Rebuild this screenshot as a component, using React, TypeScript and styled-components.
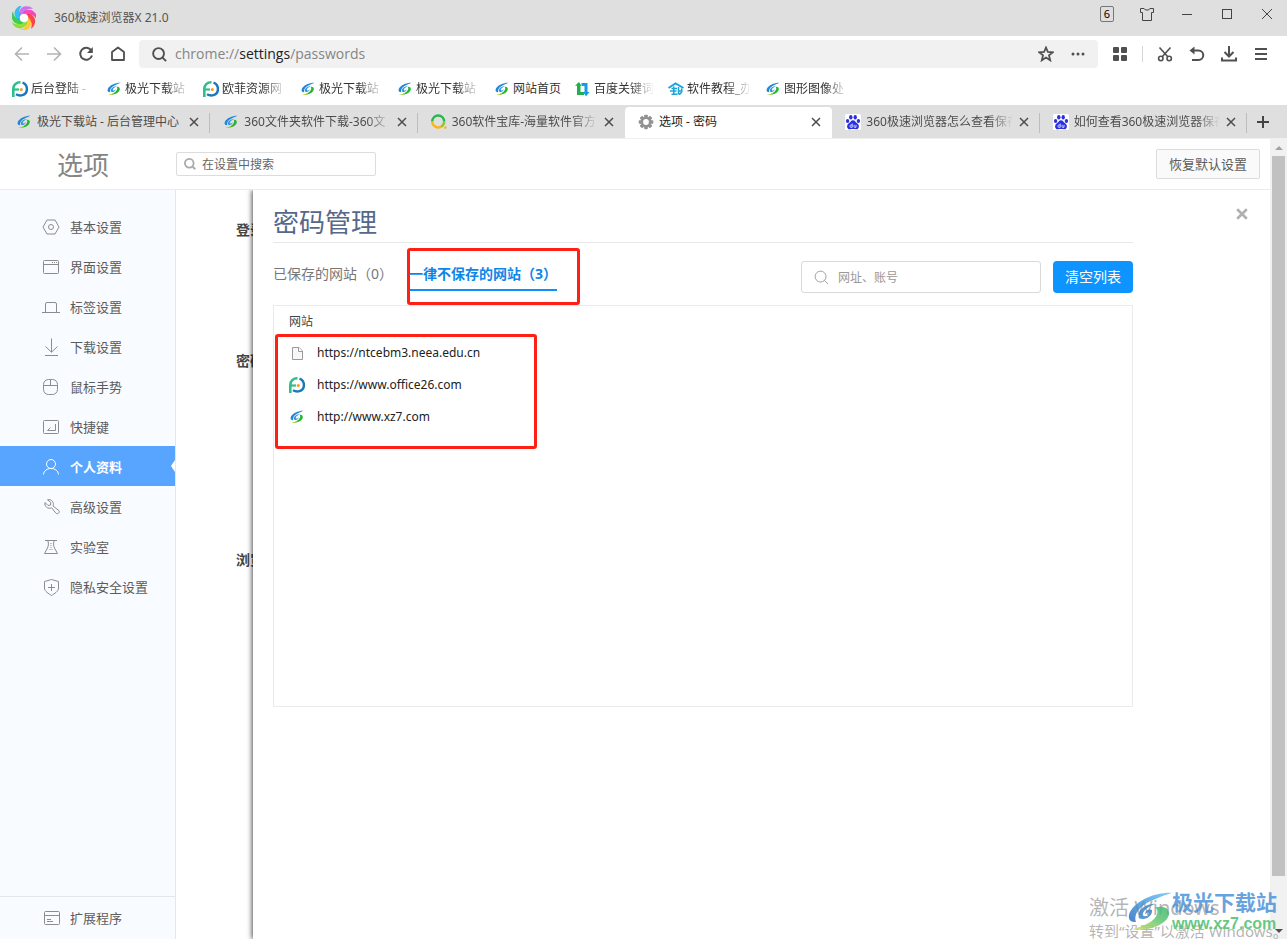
import React from 'react';
import styled, { createGlobalStyle, css } from 'styled-components';

const GlobalStyle = createGlobalStyle`
  * { box-sizing: border-box; }
  html, body { margin: 0; padding: 0; }
  body, button, input {
    font-family: "Noto Sans", "Noto Sans CJK SC", sans-serif;
    font-size: 12px;
  }
  body { background: #fff; color: #555; }
  button { border: 0; padding: 0; background: none; color: inherit; display: flex; align-items: center; justify-content: center; }
  a { color: inherit; text-decoration: none; }
  svg { display: block; flex: none; }
  h1, h2, h3, p, ul { margin: 0; padding: 0; font-weight: 400; }
  ul { list-style: none; }
`;

const Page = styled.div`
  position: relative;
  min-height: 100vh;
  display: flex;
  flex-direction: column;
  overflow: hidden;
`;

/* ---------- browser chrome ---------- */

const TitleBar = styled.header`
  display: flex;
  align-items: center;
  justify-content: space-between;
  height: 36px;
  padding-left: 12px;
  background: #dfdfdf;
`;

const AppName = styled.div`
  display: flex;
  align-items: center;
  gap: 18px;
  line-height: 20px;
`;

const WindowButtons = styled.div`
  display: flex;
  align-self: flex-start;
`;

const WindowButton = styled.button`
  width: 40px;
  height: 28px;
  color: #444;
`;

const CountBadge = styled.span`
  width: 14px;
  height: 16px;
  border: 1px solid #777;
  border-radius: 2px;
  color: #000;
  font-size: 11px;
  line-height: 14px;
`;

const Toolbar = styled.div`
  display: flex;
  align-items: center;
  height: 36px;
  padding: 0 10px 0 6px;
  color: #505050;
`;

const ToolButton = styled.button<{ $dim?: boolean }>`
  width: 32px;
  height: 28px;
  color: ${(p) => (p.$dim ? '#b4b4b4' : '#505050')};
`;

const AddressBar = styled.div`
  display: flex;
  align-items: center;
  flex: 1;
  height: 28px;
  margin: 0 6px 0 5px;
  padding: 0 4px 0 13px;
  border-radius: 4px;
  background: #f1f1f1;
`;

const Address = styled.p`
  flex: 1;
  padding-left: 8px;
  font-family: "Open Sans", "Noto Sans CJK SC", sans-serif;
  font-size: 14px;
  line-height: 20px;
  color: #858585;
  b { color: #222; font-weight: 400; }
`;

const ToolDivider = styled.span`
  width: 1px;
  height: 16px;
  margin: 0 6px;
  background: #d5d5d5;
`;

const BookmarkBar = styled.nav`
  display: flex;
  align-items: center;
  gap: 14px;
  height: 33px;
  padding-left: 12px;
`;

const Bookmark = styled.a`
  display: flex;
  align-items: center;
  gap: 3px;
  line-height: 18px;
  color: #333;
`;

const fade = css`
  overflow: hidden;
  white-space: nowrap;
  mask-image: linear-gradient(to right, #000 calc(100% - 24px), transparent);
`;

const BookmarkText = styled.span<{ $width: number; $full?: boolean }>`
  width: ${(p) => p.$width}px;
  white-space: nowrap;
  ${(p) => !p.$full && fade}
`;

const TabStrip = styled.nav`
  display: flex;
  height: 33px;
  padding-left: 3px;
  background: #dfdfdf;
`;

const Tab = styled.div<{ $active?: boolean; $divider?: boolean }>`
  display: flex;
  align-items: center;
  flex: 1;
  min-width: 0;
  margin-top: ${(p) => (p.$active ? 2 : 0)}px;
  padding: 0 9px 0 13px;
  border-radius: 4px 4px 0 0;
  background: ${(p) => (p.$active ? '#fff' : 'linear-gradient(#bdbdbd, #bdbdbd) right 8px / 1px 20px no-repeat')};
  ${(p) => !p.$active && !p.$divider && 'background: none;'}
  color: ${(p) => (p.$active ? '#222' : '#4c4c4c')};
  padding-bottom: ${(p) => (p.$active ? 2 : 0)}px;
`;

const TabTitle = styled.a<{ $full?: boolean }>`
  flex: 1;
  min-width: 0;
  margin-left: 5px;
  line-height: 18px;
  white-space: nowrap;
  ${(p) => !p.$full && fade}
`;

const TabClose = styled.button`
  width: 14px;
  height: 16px;
  margin-left: 4px;
  color: #4c4c4c;
`;

const NewTab = styled.button`
  width: 40px;
  padding-right: 8px;
  height: 34px;
  color: #444;
`;

/* ---------- settings page ---------- */

const Viewport = styled.div`
  display: flex;
  flex: 1;
  border-top: 1px solid #f0f0f0;
`;

const Settings = styled.div`
  display: flex;
  flex-direction: column;
  flex: 1;
  min-width: 0;
`;

const SettingsHeader = styled.header`
  display: flex;
  align-items: center;
  height: 51px;
  padding: 0 10px 0 57px;
  border-bottom: 1px solid #ebebeb;
`;

const PageTitle = styled.h1`
  width: 119px;
  padding-top: 2px;
  font-size: 26px;
  line-height: 36px;
  color: #858585;
`;

const SettingsSearch = styled.label`
  display: flex;
  align-items: center;
  gap: 6px;
  width: 200px;
  height: 24px;
  padding: 0 7px;
  border: 1px solid #dcdcdc;
  border-radius: 2px;
  color: #aaa;
`;

const BareInput = styled.input<{ $hint: string }>`
  flex: 1;
  min-width: 0;
  border: 0;
  padding: 2px 0 0;
  outline: 0;
  background: none;
  line-height: 18px;
  color: #444;
  &::placeholder { color: ${(p) => p.$hint}; opacity: 1; }
`;

const ResetButton = styled.button`
  width: 104px;
  height: 30px;
  margin-left: auto;
  padding-bottom: 2px;
  border: 1px solid #dcdcdc;
  border-radius: 2px;
  background: #fafafa;
  font-size: 13px;
  color: #5c5c5c;
`;

const Body = styled.div`
  display: flex;
  flex: 1;
`;

const Sidebar = styled.nav`
  display: flex;
  flex-direction: column;
  width: 176px;
  padding-top: 16px;
  border-right: 1px solid #e3e7ec;
  background: #f8fbff;
`;

const MenuItem = styled.a<{ $active?: boolean }>`
  position: relative;
  display: flex;
  align-items: center;
  gap: 10px;
  height: 40px;
  padding: 2px 0 0 42px;
  font-size: 13px;
  line-height: 20px;
  color: ${(p) => (p.$active ? '#fff' : '#5c5c5c')};
  font-weight: ${(p) => (p.$active ? 700 : 400)};
  background: ${(p) => (p.$active ? '#57a5ff' : 'none')};
  svg { color: ${(p) => (p.$active ? '#fff' : '#8c8c8c')}; }
`;

const Pointer = styled.span`
  position: absolute;
  right: 0;
  top: 14px;
  border: 6px solid transparent;
  border-right: 4px solid #fff;
  border-left: 0;
`;

const MenuFooter = styled.div`
  margin-top: auto;
  padding-bottom: 2px;
  border-top: 1px solid #e3e7ec;
`;

const Underlay = styled.div`
  width: 77px;
  padding: 30px 0 0 60px;
  overflow: hidden;
`;

const SectionName = styled.h3<{ $height: number }>`
  height: ${(p) => p.$height}px;
  font-size: 14px;
  font-weight: 700;
  line-height: 20px;
  white-space: nowrap;
  color: #444;
`;

const Panel = styled.main`
  position: relative;
  display: flex;
  justify-content: space-between;
  align-items: flex-start;
  flex: 1;
  min-width: 0;
  padding: 12px 20px 0 20px;
  background: #fff;
  box-shadow: -1px 0 5px rgba(0, 0, 0, 0.7);
  clip-path: inset(0 0 0 -10px);
`;

const Manager = styled.section`
  flex: 1;
  max-width: 860px;
`;

const ManagerTitle = styled.h2`
  height: 41px;
  border-bottom: 1px solid #e8e8e8;
  font-size: 26px;
  line-height: 40px;
  color: #56688a;
`;

const Controls = styled.div`
  display: flex;
  align-items: flex-start;
  margin-top: 18px;
`;

const SiteTab = styled.button<{ $active?: boolean }>`
  height: 30px;
  margin-right: 16px;
  padding-bottom: ${(p) => (p.$active ? 2 : 4)}px;
  font-size: 14px;
  line-height: 20px;
  white-space: nowrap;
  color: ${(p) => (p.$active ? '#0d86e8' : '#777')};
  font-weight: ${(p) => (p.$active ? 700 : 400)};
  border-bottom: ${(p) => (p.$active ? '2px solid #0d8fff' : '0')};
`;

const SiteSearch = styled.label`
  display: flex;
  align-items: center;
  gap: 9px;
  width: 240px;
  height: 32px;
  margin: 0 12px 0 auto;
  padding: 0 12px;
  border: 1px solid #d9d9d9;
  border-radius: 3px;
  color: #999;
`;

const ClearButton = styled.button`
  width: 80px;
  height: 32px;
  padding-bottom: 2px;
  border-radius: 4px;
  background: #0d94ff;
  color: #fff;
  font-size: 14px;
`;

const SiteList = styled.div`
  min-height: 402px;
  margin-top: 12px;
  border: 1px solid #ebebeb;
`;

const SiteTable = styled.table`
  width: 100%;
  border-collapse: collapse;
  th, td { height: 32px; padding: 0 15px 2px; text-align: left; font-weight: 400; }
  th { color: #444; }
  td { color: #222; }
`;

const Site = styled.div`
  display: flex;
  align-items: center;
  gap: 12px;
  line-height: 20px;
`;

const PanelClose = styled.button`
  width: 16px;
  height: 16px;
  margin-top: 4px;
  color: #b0b0b0;
`;

const Scrollbar = styled.div`
  display: flex;
  flex-direction: column;
  align-items: center;
  width: 17px;
  background: #f1f1f1;
`;

const ScrollArrow = styled.button`
  width: 17px;
  height: 17px;
`;

const ScrollTrack = styled.div`
  flex: 1;
  width: 13px;
`;

const ScrollThumb = styled.div`
  height: 94%;
  background: #c1c1c1;
`;

/* ---------- overlays ---------- */

const Marker = styled.div<{ $x: number; $y: number; $w: number; $h: number }>`
  position: absolute;
  left: ${(p) => p.$x}px;
  top: ${(p) => p.$y}px;
  width: ${(p) => p.$w}px;
  height: ${(p) => p.$h}px;
  border: 3px solid #ff2015;
  border-radius: 3px;
  pointer-events: none;
`;

const Activation = styled.div`
  position: absolute;
  right: 2px;
  bottom: -2px;
  width: 196px;
  color: rgba(130, 130, 130, 0.6);
  font-size: 15px;
  line-height: 20px;
  white-space: nowrap;
  pointer-events: none;
`;

const ActivationTitle = styled.p`
  font-size: 20px;
  line-height: 26px;
`;

const SiteMark = styled.div`
  position: absolute;
  right: 10px;
  bottom: 6px;
  display: flex;
  align-items: center;
  pointer-events: none;
`;

const MarkName = styled.p`
  font-size: 21px;
  font-weight: 700;
  line-height: 26px;
  color: rgba(75, 146, 216, 0.85);
`;

const MarkUrl = styled.p`
  font-family: "Liberation Sans", sans-serif;
  font-size: 16px;
  font-weight: 700;
  line-height: 18px;
  color: rgba(76, 190, 110, 0.85);
`;

/* ---------- drawings ---------- */

const Line = ({ size = 16, w = 1, box = 16, children }: { size?: number; w?: number; box?: number; children: React.ReactNode }) => (
  <svg width={size} height={size} viewBox={`0 0 ${box} ${box}`} fill="none" stroke="currentColor" strokeWidth={w} aria-hidden="true">
    {children}
  </svg>
);

const petals = ['#c95cf5', '#f92bb0', '#fb2a2a', '#ffc61c', '#7fdc1c', '#1fc93a', '#18b4f5'];
const AppLogo = () => (
  <svg width="24" height="24" viewBox="-12 -12 24 24" aria-hidden="true">
    <circle r="7.500" fill="none" stroke="#fff" strokeWidth="4" opacity="0.5" />
    {petals.map((c, i) => (
      <path key={c} d="M-4.200 -1.500 C-6.500 -6 -3.500 -11.500 2 -11.800 C5 -12 7.500 -11 9 -9 C5 -10 1.500 -8.500 0.500 -4.500 C-1.500 -4.500 -3.500 -3.500 -4.200 -1.500 Z" fill={c} opacity="0.85" transform={`rotate(${i * 51.4})`} />
    ))}
    <circle r="4" fill="#fff" opacity="0.9" />
  </svg>
);

const Aurora = () => (
  <svg width="16" height="16" viewBox="0 0 16 16" aria-hidden="true">
    <path d="M14.500 1.800 C9 1.800 3.500 4.300 1.800 8 C1 10 2 11.300 4.300 11.200 C3.300 8.500 5.800 5.300 10 3.700 C11.500 3 13 2.300 14.500 1.800 Z" fill="#1f86dc" />
    <path d="M4.800 9.800 C4.800 7 8 5 11 5.200 C8.500 6 6.600 7.400 6.700 9.300 C8 10 9.300 9 9.300 8 C10 9.800 7.500 11.400 5.600 10.900 Z" fill="#2e93dd" />
    <path d="M2.500 13.800 C7.500 14.200 13 12.500 13.800 8.500 C14 6.500 12.600 5.500 10.800 5.900 C12 7.600 10.600 10.300 7.800 11.900 C6.200 12.800 4.200 13.400 2.500 13.800 Z" fill="#27b52f" />
    <path d="M2.500 13.800 C4.200 13.400 6.200 12.800 7.800 11.900 C8.500 13 5.500 14.200 2.500 13.800 Z" fill="#d3d92b" />
  </svg>
);

const Office = () => (
  <svg width="16" height="16" viewBox="0 0 16 16" fill="none" aria-hidden="true">
    <path d="M1.300 16 V8 C1.300 4 4 1.300 8.500 1.300" stroke="#2fbf8b" strokeWidth="2.600" />
    <path d="M1.500 8.500 H7" stroke="#2fbf8b" strokeWidth="2.200" />
    <path d="M10.500 1.600 C16.500 3.800 16.300 12.500 10.500 14.200 C8 15 6 14.500 4 13.300" stroke="#1b78bf" strokeWidth="2.400" />
    <circle cx="9.300" cy="8.500" r="1.500" fill="#ff9a1f" />
  </svg>
);

const Ring360 = () => (
  <svg width="16" height="16" viewBox="0 0 16 16" fill="none" strokeWidth="2.400" aria-hidden="true">
    <path d="M1.200 7.500 A6 6 0 1 1 13.200 7.500" stroke="#27b64e" />
    <path d="M1.200 7.500 A6 6 0 0 0 10.200 12.600" stroke="#f7b719" />
    <path d="M10.200 12.600 A6 6 0 0 0 13.200 7.500" stroke="#8fc23a" />
    <circle cx="14.300" cy="13.600" r="1.300" fill="#f7b719" />
  </svg>
);

const Keyword = () => (
  <svg width="16" height="16" viewBox="0 0 16 16" aria-hidden="true">
    <path d="M0 4.800 L4 1 L6.500 4.800 H5.500 V11 H9 V14 H2 V4.800 Z" fill="#23b04a" />
    <path d="M6.500 2 H12.500 V11 H14.500 L11 15.300 L8 11 H9.500 V5 H6.500 Z" fill="#109ce8" />
  </svg>
);

const Course = () => (
  <svg width="16" height="16" viewBox="0 0 16 16" fill="none" stroke="#1ba4dc" strokeWidth="1.500" aria-hidden="true">
    <path d="M0.500 7 L7.500 2.500 L15.500 7" strokeWidth="2" />
    <path d="M3.500 7.500 H9 M2 10 H8.500 M3.500 13.200 H9.500 M5.800 5.500 V13" />
    <path d="M10.500 6 V13.500 M13 7.500 C14.800 9 14 12 11 13.500 M11 10 H14.500" />
  </svg>
);

const Baidu = () => (
  <svg width="16" height="16" viewBox="0 0 16 16" aria-hidden="true">
    <rect width="16" height="16" rx="1.500" fill="#fff" />
    <g fill="#2a2fe0">
      <ellipse cx="5.800" cy="3.300" rx="1.700" ry="2.200" />
      <ellipse cx="10.200" cy="3.300" rx="1.700" ry="2.200" />
      <ellipse cx="2.600" cy="7" rx="1.700" ry="2.100" />
      <ellipse cx="13.400" cy="7" rx="1.700" ry="2.100" />
      <path d="M8 6.300 C10 6.300 10.500 8.300 12.400 9.500 C15 11.500 14 15.500 11 15.300 C9 15 7 15 5 15.300 C2 15.500 1 11.500 3.600 9.500 C5.500 8.300 6 6.300 8 6.300 Z" />
    </g>
    <path d="M7.200 9.500 V13.300 H5.800 C4.600 13.300 4.600 11 5.800 11 H7 M9 10.800 V12.700 C9 13.300 9.500 13.400 11 13.300 V10.800" fill="none" stroke="#fff" strokeWidth="0.800" />
  </svg>
);

const Gear = () => (
  <svg width="16" height="16" viewBox="-8 -8 16 16" aria-hidden="true">
    {[0, 45, 90, 135].map((a) => (
      <rect key={a} x="-1.800" y="-7.300" width="3.600" height="14.600" rx="0.800" fill="#929292" transform={`rotate(${a})`} />
    ))}
    <circle r="5.500" fill="#929292" />
    <circle r="2.900" fill="#fff" />
  </svg>
);

const Cross = ({ size = 10, w = 1.5 }: { size?: number; w?: number }) => (
  <Line size={size} box={10} w={w}><path d="M1 1 L9 9 M9 1 L1 9" /></Line>
);

const Magnifier = ({ size, w }: { size: number; w: number }) => (
  <Line size={size} w={w}><circle cx="7" cy="7" r="5.800" /><path d="M11 11 L15 15" /></Line>
);

const PageIcon = () => (
  <svg width="16" height="16" viewBox="0 0 16 16" fill="#f7f7f7" stroke="#999" aria-hidden="true">
    <path d="M3.500 2.500 H10 L13.500 6 V14.500 H3.500 Z" /><path d="M9.500 2.500 V6.500 H13.500" fill="#fff" />
  </svg>
);

/* ---------- data ---------- */

const bookmarks = [
  { icon: <Office />, text: '后台登陆 -', width: 61 },
  { icon: <Aurora />, text: '极光下载站', width: 64 },
  { icon: <Office />, text: '欧菲资源网', width: 64 },
  { icon: <Aurora />, text: '极光下载站', width: 64 },
  { icon: <Aurora />, text: '极光下载站', width: 64 },
  { icon: <Aurora />, text: '网站首页', width: 48, full: true },
  { icon: <Keyword />, text: '百度关键词', width: 60 },
  { icon: <Course />, text: '软件教程_办', width: 64 },
  { icon: <Aurora />, text: '图形图像处', width: 64 },
];

const tabs = [
  { icon: <Aurora />, text: '极光下载站 - 后台管理中心', divider: true, full: true },
  { icon: <Aurora />, text: '360文件夹软件下载-360文', divider: true },
  { icon: <Ring360 />, text: '360软件宝库-海量软件官方' },
  { icon: <Gear />, text: '选项 - 密码', active: true, full: true },
  { icon: <Baidu />, text: '360极速浏览器怎么查看保存', divider: true },
  { icon: <Baidu />, text: '如何查看360极速浏览器保存', divider: true },
];

const menu = [
  { text: '基本设置', art: <><path d="M5 2 H13 L17 9 L13 16 H5 L1 9 Z" /><circle cx="9" cy="9" r="2.500" /></> },
  { text: '界面设置', art: <><rect x="1.500" y="2.500" width="15" height="13" rx="1" /><path d="M1.500 6.500 H16.500 M10 4.500 h1 M12 4.500 h1 M14 4.500 h1" /></> },
  { text: '标签设置', art: <><path d="M3.500 14.500 V6 Q3.500 4.500 5 4.500 H13 Q14.500 4.500 14.500 6 V14.500" /><path d="M0 14.500 H18" /></> },
  { text: '下载设置', art: <path d="M9.500 0.500 V14 M3.500 8.500 L9.500 14.200 L15.500 8.500 M3 17.500 H16" /> },
  { text: '鼠标手势', art: <><rect x="1.500" y="1.500" width="14" height="15" rx="5" /><path d="M1.500 7.500 H15.500 M8.500 1.500 V7.500" /></> },
  { text: '快捷键', art: <><rect x="1.500" y="2.500" width="15" height="13" rx="1" /><path d="M13.500 6 V12.500 H5.500 M8.500 9.500 L5.500 12.500" /></> },
  { text: '个人资料', active: true, art: <><circle cx="9" cy="6" r="4.500" /><path d="M1.500 16.500 C2 12.500 5 10.500 9 10.500 C13 10.500 16 12.500 16.500 16.500" /></> },
  { text: '高级设置', art: <path d="M5.500 1.800 C9.500 0.800 12.500 4.500 11 8 L17 12.700 C18 14.700 15.800 16.500 14 15.300 L9.500 9.700 C6 11.500 2.200 8.500 3 4.500 L6 7.500 L8.500 7 L8.800 4.500 Z" /> },
  { text: '实验室', art: <><path d="M3 2.500 H15 M5.500 2.500 C7 4 6.500 8 5.500 10 L2.500 15.500 H15.500 L12.500 10 C11.500 8 11 4 12.500 2.500" /><path d="M9 5 V11 M7.500 11.500 H10.500" strokeDasharray="1 1" /></> },
  { text: '隐私安全设置', art: <><path d="M9.500 1.500 L16.500 3.500 V10 C16.500 13.500 12.500 15.500 9.500 17.500 C6.500 15.500 2.500 13.500 2.500 10 V3.500 Z" /><path d="M9.500 6 V13 M6 9.500 H13" /></> },
];

const sites = [
  { icon: <PageIcon />, url: 'https://ntcebm3.neea.edu.cn' },
  { icon: <Office />, url: 'https://www.office26.com' },
  { icon: <Aurora />, url: 'http://www.xz7.com' },
];

export default function App() {
  return (
    <Page>
      <GlobalStyle />
      <TitleBar>
        <AppName><AppLogo />360极速浏览器X 21.0</AppName>
        <WindowButtons>
          <WindowButton aria-label="窗口数"><CountBadge>6</CountBadge></WindowButton>
          <WindowButton aria-label="皮肤">
            <Line><path d="M1.500 2.500 H5 C5.500 4.500 10.500 4.500 11 2.500 H14.500 V6.500 H12.500 V14.500 H3.500 V6.500 H1.500 Z" /></Line>
          </WindowButton>
          <WindowButton aria-label="最小化"><Line size={10} box={10}><path d="M0 5.500 H10" /></Line></WindowButton>
          <WindowButton aria-label="最大化"><Line size={10} box={10}><rect x="0.500" y="0.500" width="9" height="9" /></Line></WindowButton>
          <WindowButton aria-label="关闭"><Line size={12} box={12}><path d="M1 1 L11 11 M11 1 L1 11" /></Line></WindowButton>
        </WindowButtons>
      </TitleBar>

      <Toolbar>
        <ToolButton $dim aria-label="后退"><Line w={1.6}><path d="M15 8 H2 M8 1.500 L1.500 8 L8 14.500" /></Line></ToolButton>
        <ToolButton $dim aria-label="前进"><Line w={1.6}><path d="M1 8 H14 M8 1.500 L14.500 8 L8 14.500" /></Line></ToolButton>
        <ToolButton aria-label="刷新">
          <Line w={2}><path d="M13.300 4.500 A6 6 0 1 0 14 9.500" /><path d="M14.800 1 V7 H9 Z" fill="currentColor" stroke="none" /></Line>
        </ToolButton>
        <ToolButton aria-label="主页"><Line w={1.8}><path d="M2 14 V6 L8 1.500 L14 6 V14 Z" strokeLinejoin="round" /></Line></ToolButton>
        <AddressBar>
          <Magnifier size={15} w={2} />
          <Address>chrome://<b>settings</b>/passwords</Address>
          <ToolButton aria-label="收藏"><Line w={1.8}><path d="M8 1.500 L9.900 6 L14.700 6.300 L11 9.400 L12.200 14.300 L8 11.600 L3.800 14.300 L5 9.400 L1.300 6.300 L6.100 6 Z" /></Line></ToolButton>
          <ToolButton aria-label="更多">
            <svg width="16" height="16" viewBox="0 0 16 16" fill="currentColor" aria-hidden="true"><circle cx="3" cy="8" r="1.500" /><circle cx="8" cy="8" r="1.500" /><circle cx="13" cy="8" r="1.500" /></svg>
          </ToolButton>
        </AddressBar>
        <ToolButton aria-label="扩展">
          <svg width="14" height="14" viewBox="0 0 14 14" fill="currentColor" aria-hidden="true"><rect width="6" height="6" rx="1" /><rect x="8" width="6" height="6" rx="1" /><rect y="8" width="6" height="6" rx="1" /><rect x="8" y="8" width="6" height="6" rx="1" /></svg>
        </ToolButton>
        <ToolDivider />
        <ToolButton aria-label="截图"><Line w={1.6}><circle cx="3.800" cy="12.500" r="2.200" /><circle cx="12.200" cy="12.500" r="2.200" /><path d="M2.500 1.500 L11 11 M13.500 1.500 L5 11" /></Line></ToolButton>
        <ToolButton aria-label="恢复"><Line w={2}><path d="M4 4.500 H9.500 A4.700 4.700 0 0 1 9.500 14 H3" /><path d="M5.500 0.500 V8.500 L0.500 4.500 Z" fill="currentColor" stroke="none" /></Line></ToolButton>
        <ToolButton aria-label="下载"><Line w={2}><path d="M8 0 V10 M3.500 6 L8 10.500 L12.500 6 M1 11.500 V14.500 H15 V11.500" /></Line></ToolButton>
        <ToolButton aria-label="菜单"><Line w={2}><path d="M2 3 H14 M2 8 H14 M2 13 H14" /></Line></ToolButton>
      </Toolbar>

      <BookmarkBar>
        {bookmarks.map((b, i) => (
          <Bookmark key={i} href="#">{b.icon}<BookmarkText $width={b.width} $full={b.full}>{b.text}</BookmarkText></Bookmark>
        ))}
      </BookmarkBar>

      <TabStrip>
        {tabs.map((t) => (
          <Tab key={t.text} $active={t.active} $divider={t.divider}>
            {t.icon}
            <TabTitle href="#" $full={t.full}>{t.text}</TabTitle>
            <TabClose aria-label="关闭标签"><Cross /></TabClose>
          </Tab>
        ))}
        <NewTab aria-label="新标签"><Line size={12} box={12} w={2}><path d="M6 0 V12 M0 6 H12" /></Line></NewTab>
      </TabStrip>

      <Viewport>
        <Settings>
          <SettingsHeader>
            <PageTitle>选项</PageTitle>
            <SettingsSearch>
              <Magnifier size={12} w={2.4} />
              <BareInput $hint="#666" placeholder="在设置中搜索" aria-label="在设置中搜索" />
            </SettingsSearch>
            <ResetButton>恢复默认设置</ResetButton>
          </SettingsHeader>
          <Body>
            <Sidebar>
              {menu.map((m) => (
                <MenuItem key={m.text} href="#" $active={m.active}>
                  <Line size={18} box={18}>{m.art}</Line>
                  {m.text}
                  {m.active && <Pointer />}
                </MenuItem>
              ))}
              <MenuFooter>
                <MenuItem href="#">
                  <Line size={18} box={18}><rect x="2.500" y="2.500" width="15" height="13" rx="1" /><path d="M2.500 6.500 H17.500 M5 10.500 H9 M5 12.500 H11" /></Line>
                  扩展程序
                </MenuItem>
              </MenuFooter>
            </Sidebar>
            <Underlay>
              <SectionName $height={131}>登录</SectionName>
              <SectionName $height={199}>密码</SectionName>
              <SectionName $height={20}>浏览</SectionName>
            </Underlay>
            <Panel>
              <Manager>
                <ManagerTitle>密码管理</ManagerTitle>
                <Controls>
                  <SiteTab>已保存的网站（0）</SiteTab>
                  <SiteTab $active>一律不保存的网站（3）</SiteTab>
                  <SiteSearch>
                    <Magnifier size={15} w={1} />
                    <BareInput $hint="#999" placeholder="网址、账号" aria-label="网址、账号" />
                  </SiteSearch>
                  <ClearButton>清空列表</ClearButton>
                </Controls>
                <SiteList>
                  <SiteTable>
                    <thead><tr><th>网站</th></tr></thead>
                    <tbody>
                      {sites.map((s) => (
                        <tr key={s.url}><td><Site>{s.icon}{s.url}</Site></td></tr>
                      ))}
                    </tbody>
                  </SiteTable>
                </SiteList>
              </Manager>
              <PanelClose aria-label="关闭"><Cross size={12} w={2.2} /></PanelClose>
              <Marker $x={154} $y={58} $w={173} $h={57} />
              <Marker $x={22} $y={144} $w={262} $h={115} />
            </Panel>
          </Body>
        </Settings>
        <Scrollbar>
          <ScrollArrow aria-label="向上滚动"><svg width="8" height="4" viewBox="0 0 8 4" aria-hidden="true"><path d="M0 4 L4 0 L8 4 Z" fill="#a3a3a3" /></svg></ScrollArrow>
          <ScrollTrack><ScrollThumb /></ScrollTrack>
          <ScrollArrow aria-label="向下滚动"><svg width="8" height="4" viewBox="0 0 8 4" aria-hidden="true"><path d="M0 0 L4 4 L8 0 Z" fill="#505050" /></svg></ScrollArrow>
        </Scrollbar>
      </Viewport>

      <Activation>
        <ActivationTitle>激活 Windows</ActivationTitle>
        <p>转到“设置”以激活 Windows。</p>
      </Activation>
      <SiteMark>
        <svg width="44" height="40" viewBox="0 0 44 44" preserveAspectRatio="none" opacity="0.85" aria-hidden="true">
          <defs>
            <linearGradient id="sky" x1="0" y1="1" x2="1" y2="0"><stop offset="0" stopColor="#2b6fc0" /><stop offset="1" stopColor="#6cc8f5" /></linearGradient>
            <linearGradient id="leaf" x1="0" y1="1" x2="1" y2="0"><stop offset="0" stopColor="#d8e36a" /><stop offset="0.600" stopColor="#5cc470" /><stop offset="1" stopColor="#3fb870" /></linearGradient>
          </defs>
          <path d="M44 2 C26 1 5 12 1 26 C0 32 3 34 8 34 C5 24 14 14 27 9 C33 6 39 4 44 2 Z" fill="url(#sky)" />
          <path d="M11 30 C9 21 17 14 28 14 C20 17 14 22 15 27 C18 29 21 27 21 24 C19 23 18 24 17 26 C17 21 22 19 24 21 C25 27 18 33 11 30 Z" fill="#3c86cc" />
          <path d="M4 42 C22 45 40 36 41 25 C41 18 35 16 27 18 C32 22 29 30 21 35 C16 38 10 41 4 42 Z" fill="url(#leaf)" />
        </svg>
        <div>
          <MarkName>极光下载站</MarkName>
          <MarkUrl>www.xz7.com</MarkUrl>
        </div>
      </SiteMark>
    </Page>
  );
}
